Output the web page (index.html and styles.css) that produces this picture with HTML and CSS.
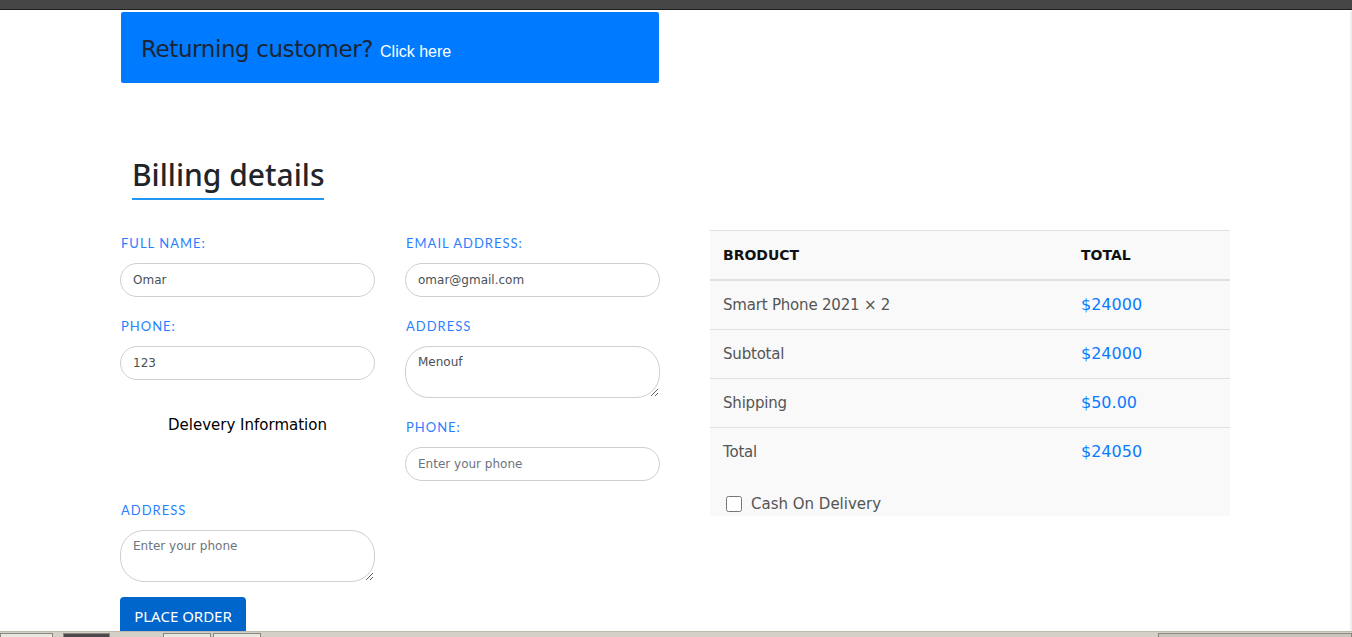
FILE: index.html
```html
<!DOCTYPE html>
<html lang="en">
<head>
<meta charset="utf-8">
<title>Checkout</title>
<link rel="stylesheet" href="styles.css">
</head>
<body>
<div class="topbar"></div>
<main class="container">
  <div class="returning">Returning customer? <a href="#" class="click">Click here</a></div>
  <h2 class="title">Billing details</h2>
  <div class="checkout">
    <form class="form">
      <div class="grid">
        <div class="field"><label>Full Name:</label><input class="ctrl" value="Omar"></div>
        <div class="field"><label>Email Address:</label><input class="ctrl" value="omar@gmail.com"></div>
        <div class="field"><label>Phone:</label><input class="ctrl" value="123"></div>
        <div class="field"><label>Address</label><textarea class="ctrl area">Menouf</textarea></div>
        <div class="field"><h5 class="sub">Delevery Information</h5></div>
        <div class="field"><label>Phone:</label><input class="ctrl" placeholder="Enter your phone"></div>
        <div class="field"><label>Address</label><textarea class="ctrl area" placeholder="Enter your phone"></textarea></div>
      </div>
      <button type="button" class="btn">PLACE ORDER</button>
    </form>
    <div class="order">
      <table class="tbl">
        <thead>
          <tr><th class="c1">BRODUCT</th><th>TOTAL</th></tr>
        </thead>
        <tbody>
          <tr><td class="c1">Smart Phone 2021 × 2</td><td class="price">$24000</td></tr>
          <tr><td class="c1">Subtotal</td><td class="price">$24000</td></tr>
          <tr><td class="c1">Shipping</td><td class="price">$50.00</td></tr>
          <tr class="last"><td class="c1">Total</td><td class="price">$24050</td></tr>
        </tbody>
      </table>
      <label class="cod"><input type="checkbox" class="box"> Cash On Delivery</label>
    </div>
  </div>
</main>
<div class="scroll"></div>
<div class="bottombar">
  <span class="tab t1"></span><span class="tab t2"></span><span class="tab t3"></span><span class="tab t4"></span><span class="tab t5"></span>
</div>
</body>
</html>
```

FILE: styles.css
```css
* { box-sizing: border-box; }
html, body { margin: 0; padding: 0; background: #fff; }
body {
  font-family: "Noto Sans", "DejaVu Sans", sans-serif;
  color: #212529;
  overflow: hidden;
  height: 637px;
}
.topbar {
  height: 10px;
  background: #464646;
  border-bottom: 1px solid #1f1f1f;
}
.container {
  width: 1110px;
  margin: 0 0 0 120px;
}
.returning {
  margin: 2px 0 0 1px;
  width: 538px;
  height: 71px;
  background: #007bff;
  border-radius: 2px;
  padding: 24px 0 0 20px;
  font-family: "DejaVu Sans", sans-serif;
  font-size: 23px;
  color: #1d2533;
  letter-spacing: -0.4px;
}
.click {
  font-family: "Liberation Sans", Arial, sans-serif;
  font-size: 16px;
  color: #fff;
  text-decoration: none;
  letter-spacing: 0;
}
.title {
  display: inline-block;
  margin: 73px 0 0 12px;
  font-family: "Noto Sans", sans-serif;
  font-weight: 500;
  font-size: 30px;
  line-height: 38px;
  padding-bottom: 4px;
  border-bottom: 2px solid #2196f3;
  color: #212529;
}
.checkout {
  display: flex;
  gap: 50px;
  margin-top: 30px;
  align-items: flex-start;
}
.form { width: 540px; }
.grid {
  display: grid;
  grid-template-columns: 255px 255px;
  column-gap: 30px;
}
.field { margin-bottom: 16px; }
.field label {
  display: block;
  font-family: "Lato", sans-serif;
  font-size: 13px;
  line-height: 20px;
  letter-spacing: 1px;
  text-transform: uppercase;
  color: #2a7fff;
  margin: 3px 0 10px 1px;
}
.ctrl {
  display: block;
  width: 255px;
  height: 34px;
  border: 1px solid #cfcfcf;
  border-radius: 17px;
  padding: 0 12px;
  font-family: "DejaVu Sans", sans-serif;
  font-size: 12px;
  color: #495057;
  background: #fff;
  outline: none;
}
.ctrl::placeholder { color: #6c757d; }
.area {
  height: 52px;
  border-radius: 24px;
  padding: 8px 12px;
  resize: vertical;
}
.sub {
  margin: 1px 0 0;
  text-align: center;
  font-family: "DejaVu Sans", sans-serif;
  font-size: 15px;
  line-height: 20px;
  font-weight: 500;
  color: #000;
}
.btn {
  display: block;
  margin-top: -1px;
  width: 126px;
  height: 44px;
  border: 0;
  border-radius: 4px;
  background: #0066cc;
  color: #fff;
  font-family: "Noto Sans", sans-serif;
  font-size: 15px;
  padding: 0 0 6px;
  text-align: center;
}
.order {
  width: 520px;
  background: #f9f9f9;
  margin-top: 0;
  height: 286px;
}
.tbl {
  width: 100%;
  border-collapse: collapse;
  font-family: "DejaVu Sans", sans-serif;
  font-size: 15px;
}
.tbl th, .tbl td {
  text-align: left;
  padding: 12px 12px 12px 13px;
  line-height: 24px;
  border-top: 1px solid #dee2e6;
}
.tbl .c1 { width: 358px; }
.tbl th {
  font-weight: bold;
  color: #111;
  font-size: 14px;
  border-bottom: 2px solid #dee2e6;
  padding-bottom: 12px;
}
.tbl td { color: #555; }
.tbl td.c1 { letter-spacing: -0.2px; }
.tbl td.price { color: #0a7bff; font-size: 16px; }
.tbl thead + tbody tr:first-child td { border-top: 0; }
.cod {
  display: flex;
  align-items: center;
  gap: 9px;
  margin: 19px 0 0 16px;
  font-family: "DejaVu Sans", sans-serif;
  font-size: 15px;
  color: #555;
}
.box {
  margin: 0;
  width: 16px;
  height: 16px;
}
.scroll {
  position: fixed;
  right: 0;
  top: 11px;
  bottom: 6px;
  width: 2px;
  background: #efefef;
}
.bottombar {
  position: fixed;
  left: 0;
  right: 0;
  bottom: 0;
  height: 6px;
  background: #d4d0c8;
  border-top: 1px solid #bdb9b1;
}
.tab {
  position: absolute;
  top: 1px;
  height: 5px;
  border: 1px solid #8a8780;
  border-bottom: 0;
  background: #e8e6e0;
}
.t1 { left: 0; width: 53px; }
.t2 { left: 63px; width: 47px; background: #4a4a4a; }
.t3 { left: 163px; width: 48px; }
.t4 { left: 213px; width: 48px; }
.t5 { left: 1158px; width: 194px; background: #c9c5bc; }
```
